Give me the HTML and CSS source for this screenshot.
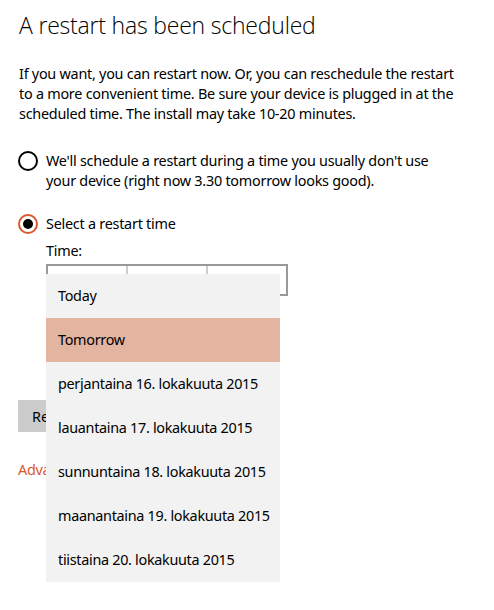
FILE: index.html
```html
<!DOCTYPE html>
<html>
<head>
<meta charset="utf-8">
<link rel="stylesheet" href="styles.css">
</head>
<body>
<div class="page">
  <h1 class="title">A restart has been scheduled</h1>
  <p class="intro">If you want, you can restart now. Or, you can reschedule the restart to a more convenient time. Be sure your device is plugged in at the scheduled time. The install may take 10-20 minutes.</p>

  <div class="option">
    <span class="radio"></span>
    <span class="option-text">We'll schedule a restart during a time you usually don't use your device (right now 3.30 tomorrow looks good).</span>
  </div>

  <div class="option option-selected">
    <span class="radio radio-checked"></span>
    <span class="option-text">Select a restart time</span>
  </div>

  <div class="picker">
    <div class="picker-label">Time:</div>
    <div class="picker-box">
      <span class="seg"></span>
      <span class="seg"></span>
      <span class="seg last"></span>
    </div>
    <ul class="dropdown">
      <li>Today</li>
      <li class="active">Tomorrow</li>
      <li>perjantaina 16. lokakuuta 2015</li>
      <li>lauantaina 17. lokakuuta 2015</li>
      <li>sunnuntaina 18. lokakuuta 2015</li>
      <li>maanantaina 19. lokakuuta 2015</li>
      <li>tiistaina 20. lokakuuta 2015</li>
    </ul>
  </div>

  <button class="btn">Restart now</button>
  <a class="link">Advanced options</a>
</div>
</body>
</html>
```
FILE: styles.css
```css
html, body {
  margin: 0;
  padding: 0;
  background: #fff;
}
body {
  font-family: "Noto Sans", "Open Sans", sans-serif;
  color: #000;
  width: 494px;
  height: 610px;
  overflow: hidden;
}
.page {
  padding: 8px 0 0 19px;
  display: flex;
  flex-direction: column;
  align-items: flex-start;
}
.title {
  margin: 0;
  font-family: "Open Sans", "Noto Sans", sans-serif;
  font-weight: 300;
  font-size: 23px;
  line-height: 34px;
  letter-spacing: -0.2px;
}
.intro {
  margin: 22px 0 0;
  width: 446px;
  font-size: 14.4px;
  line-height: 20px;
  letter-spacing: -0.25px;
}
.option {
  display: flex;
  align-items: flex-start;
  gap: 8px;
  margin-top: 27px;
  margin-left: -1px;
  font-size: 14.4px;
  line-height: 20px;
  letter-spacing: -0.25px;
}
.option-selected {
  margin-top: 23px;
}
.radio {
  flex: none;
  box-sizing: border-box;
  width: 20px;
  height: 20px;
  border: 2px solid #000;
  border-radius: 50%;
  display: flex;
  align-items: center;
  justify-content: center;
}
.radio-checked {
  border-color: #d9582b;
}
.radio-checked::after {
  content: "";
  width: 10px;
  height: 10px;
  border-radius: 50%;
  background: #000;
}
.option-text {
  max-width: 405px;
}
.picker {
  position: relative;
  margin-left: 27px;
  margin-top: 7px;
}
.picker-label {
  font-size: 14.4px;
  line-height: 20px;
  letter-spacing: -0.25px;
}
.picker-box {
  box-sizing: border-box;
  margin-top: 3px;
  width: 242px;
  height: 32px;
  border: 2px solid #999;
  display: flex;
}
.seg {
  flex: 1;
  border-right: 2px solid #ccc;
}
.seg.last {
  border-right: none;
}
.dropdown {
  position: absolute;
  left: 0;
  top: 33px;
  width: 234px;
  margin: 0;
  padding: 0;
  list-style: none;
  background: #f2f2f2;
  z-index: 2;
}
.dropdown li {
  height: 44px;
  line-height: 44px;
  padding-left: 12px;
  font-size: 14.4px;
  letter-spacing: -0.3px;
  white-space: nowrap;
}
.dropdown li.active {
  background: #e3b4a0;
}
.btn {
  margin-top: 104px;
  margin-left: -1px;
  height: 32px;
  padding: 0 14px;
  border: none;
  background: #cccccc;
  font-family: "Noto Sans", "Open Sans", sans-serif;
  font-size: 14.4px;
  color: #000;
}
.link {
  margin-top: 28px;
  margin-left: -1px;
  font-size: 14.4px;
  line-height: 20px;
  color: #d9582b;
  letter-spacing: -0.25px;
}
```
